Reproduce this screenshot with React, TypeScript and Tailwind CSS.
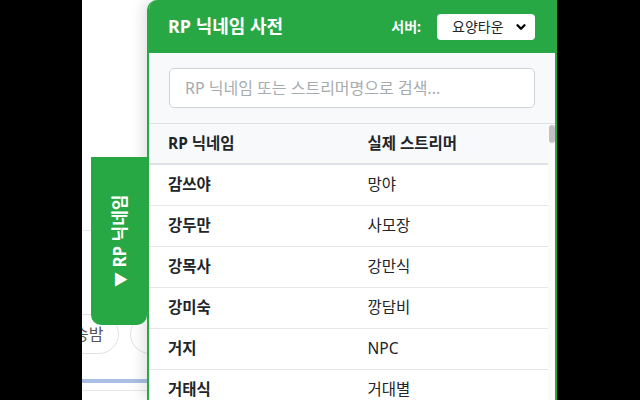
import React from "react";
import { ChevronDown } from "lucide-react";

const rows: [string, string][] = [
  ["감쓰야", "망야"],
  ["강두만", "사모장"],
  ["강목사", "강만식"],
  ["강미숙", "깡담비"],
  ["거지", "NPC"],
  ["거태식", "거대별"],
  ["견자희", "견자희"],
];

export default function App() {
  return (
    <div className="flex h-[400px] w-[640px] overflow-hidden bg-black font-['Noto_Sans','Noto_Sans_CJK_KR',sans-serif]">
      <div className="w-[82px] shrink-0 bg-black" />
      <div className="relative w-[475px] shrink-0 overflow-hidden bg-white">
        {/* background page content */}
        <div className="flex flex-col">
          <div className="h-[230px]" />
          <div className="h-px w-full bg-[#e9ecef]" />
          <div className="h-[83px]" />
          <div className="-ml-[24px] flex gap-[11px]">
            <div className="flex h-[40px] shrink-0 items-center rounded-full border border-[#dee2e6] px-[15px] text-[16px] text-[#555]">
              송밤
            </div>
            <div className="flex h-[40px] shrink-0 items-center rounded-full border border-[#dee2e6] px-[15px] text-[16px] text-[#555]">
              서비스
            </div>
          </div>
          <div className="h-[25px]" />
          <div className="h-[4px] w-full bg-[#a9c0e4]" />
          <div className="h-[7px]" />
          <div className="h-px w-full bg-[#e3e6ea]" />
        </div>

        {/* overlay panel */}
        <div className="absolute inset-y-0 right-0 w-[410px]">
          <button className="absolute right-full top-[157px] flex h-[168px] w-[56px] items-center justify-center rounded-b-[10px] bg-[#28a745] text-white">
            <span className="-rotate-90 whitespace-nowrap text-[17px] font-bold">
              <span className="text-[15px]">▼</span> RP 닉네임
            </span>
          </button>
          <div className="flex h-full flex-col overflow-hidden rounded-tl-[10px] border-x-2 border-[#28a745] bg-[#f8f9fa] shadow-[-4px_0_14px_rgba(0,0,0,0.12)]">
            <div className="flex h-[53px] shrink-0 items-center justify-between bg-[#28a745] pl-[19px] pr-[20px] text-white">
              <div className="text-[18px] font-bold">RP 닉네임 사전</div>
              <div className="flex items-center gap-[16px]">
                <span className="text-[14px] font-bold">서버:</span>
                <div className="flex h-[26px] w-[98px] items-center justify-between rounded-[4px] bg-white pl-[15px] pr-[7px] text-[14px] text-[#212529]">
                  <span>요양타운</span>
                  <ChevronDown size={14} strokeWidth={4} className="text-black" />
                </div>
              </div>
            </div>
            <div className="shrink-0 px-[20px] py-[15px]">
              <div className="flex h-[40px] items-center rounded-[5px] border border-[#ced4da] bg-white px-[15px] text-[16px] text-[#a6abb0]">
                RP 닉네임 또는 스트리머명으로 검색...
              </div>
            </div>
            <div className="flex min-h-0 flex-1 border-t border-[#dee2e6]">
              <div className="flex-1 bg-white">
                <div className="grid h-[41px] grid-cols-2 items-center border-b-2 border-[#dee2e6] bg-[#f8f9fa] text-[15.5px] font-bold text-[#212529]">
                  <div className="pl-[19px]">RP 닉네임</div>
                  <div className="pl-[19px]">실제 스트리머</div>
                </div>
                {rows.map(([a, b]) => (
                  <div
                    key={a}
                    className="grid h-[41px] grid-cols-2 items-center border-b border-[#e5e7eb] text-[15.5px] text-[#212529]"
                  >
                    <div className="pl-[19px] font-bold">{a}</div>
                    <div className="pl-[19px]">{b}</div>
                  </div>
                ))}
              </div>
              <div className="w-[7px] shrink-0 bg-[#fafafa] pt-px">
                <div className="mx-auto h-[18px] w-[6px] rounded-full bg-[#c1c1c1]" />
              </div>
            </div>
          </div>
        </div>
      </div>
      <div className="flex-1 bg-black" />
    </div>
  );
}
